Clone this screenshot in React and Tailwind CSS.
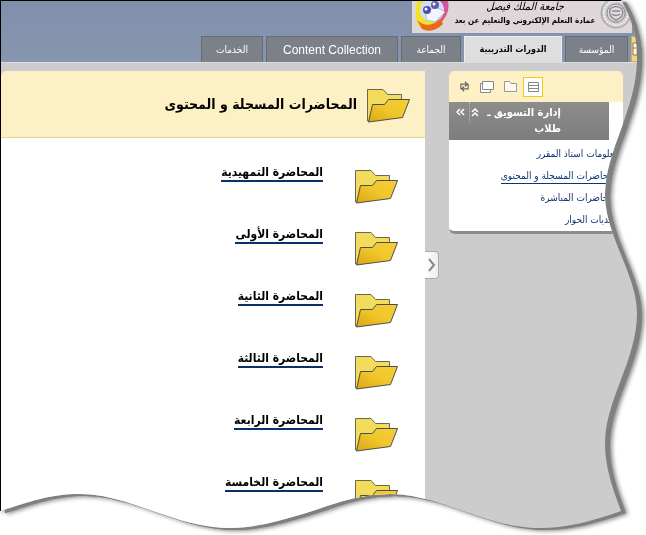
import React from "react";

const lectures = [
  "المحاضرة التمهيدية",
  "المحاضرة الأولى",
  "المحاضرة الثانية",
  "المحاضرة الثالثة",
  "المحاضرة الرابعة",
  "المحاضرة الخامسة",
];

const menu = [
  { label: "معلومات استاذ المقرر" },
  { label: "المحاضرات المسجلة و المحتوى", current: true },
  { label: "المحاضرات المباشرة" },
  { label: "منتديات الحوار" },
];

const tabs = [
  { label: "المؤسسة", width: "w-[63px]" },
  { label: "الدورات التدريبية", width: "w-[98px]", active: true },
  { label: "الجماعة", width: "w-[60px]" },
  { label: "Content Collection", width: "w-[132px]", latin: true },
  { label: "الخدمات", width: "w-[62px]" },
];

function TornEdge() {
  return (
    <svg className="absolute size-0" aria-hidden="true">
      <defs>
        <clipPath id="torn" clipPathUnits="objectBoundingBox" transform="scale(0.00154799 0.00186916)">
          <path d="M0 0H621C627 12 637 28 637 58C637 110 605 150 605 195C605 235 637 275 637 313C637 360 605 400 605 443C605 468 613 490 621 511C590 522 565 528 540 528C485 528 440 494 390 494C350 494 322 510 285 519C264 525 246 528 230 528C175 528 130 494 80 494C48 494 30 502 0 511Z" />
        </clipPath>
      </defs>
    </svg>
  );
}

function Folder() {
  return (
    <svg width="44" height="34" viewBox="0 0 44 34" className="shrink-0" aria-hidden="true">
      <defs>
        <linearGradient id="folderFront" x1="0" y1="1" x2="1" y2="0">
          <stop offset="0" stopColor="#dca514" />
          <stop offset="0.5" stopColor="#f0c62a" />
          <stop offset="1" stopColor="#f5cf36" />
        </linearGradient>
      </defs>
      <path d="M.5 .5H16L20.500 5.500H34.500V10L30 28L.5 32Z" fill="#f3dc5c" stroke="#6b6650" />
      <path d="M5.500 15.500H17.500L21.500 10.500H42.500L35.500 28.500L1.500 33Z" fill="url(#folderFront)" stroke="#4b4d50" strokeLinejoin="round" />
    </svg>
  );
}

function BannerArt() {
  return (
    <svg width="38" height="32" viewBox="0 0 38 32" className="shrink-0" aria-hidden="true">
      <path d="M5 0H36V10Q34 21 23 27Q13 33 6 24Q2 15 5 0Z" fill="#f0e428" />
      <path d="M26 0H36Q39 14 26 24L20 12Z" fill="#d6549a" />
      <path d="M5 19Q15 29 29 18L31 23Q21 33 10 28Z" fill="#e9691c" />
      <circle cx="20" cy="9" r="12" fill="#d5def0" />
      <path d="M14 11L24 6L33 11L23 21L14 19Z" fill="#f4f5fa" stroke="#b7bdd2" />
      <circle cx="15" cy="9" r="4" fill="#4d4fa6" />
      <circle cx="23" cy="4" r="4" fill="#5960b4" />
      <circle cx="14" cy="8" r="1.500" fill="#fff" />
      <circle cx="22" cy="3" r="1.500" fill="#fff" />
    </svg>
  );
}

function Seal() {
  return (
    <svg width="32" height="32" viewBox="0 0 32 32" className="shrink-0" aria-hidden="true">
      <circle cx="16" cy="12" r="15" fill="#c9c6c8" stroke="#a09da0" />
      <circle cx="16" cy="12" r="12" fill="none" stroke="#f4f0f2" strokeWidth="2" strokeDasharray="2 1" />
      <circle cx="16" cy="12" r="9" fill="#dedadd" stroke="#8d8b90" />
      <path d="M10 8Q16 3 22 8Q25 16 16 19Q8 16 10 8ZM12 10H20M12 13Q16 16 20 13" fill="none" stroke="#8d8b90" strokeWidth="1.500" />
    </svg>
  );
}

function Banner() {
  return (
    <div className="flex h-8 w-[220px] bg-[#ded6d9]">
      <Seal />
      <div className="flex flex-1 flex-col items-center whitespace-nowrap text-black">
        <span className="text-[11px] leading-3 italic">جامعة الملك فيصل</span>
        <span className="text-[8px] leading-4 font-bold">عمادة التعلم الإلكتروني والتعليم عن بعد</span>
      </div>
      <BannerArt />
    </div>
  );
}

function Tab({ tab }) {
  const look = tab.active
    ? "border-[#eee] bg-[#dedede] font-bold text-black"
    : "border-[#666b74] bg-[#7b8089] text-white";
  const size = tab.latin
    ? "text-[12px] font-['Liberation_Sans',sans-serif]"
    : tab.active
      ? "text-[9px]"
      : "text-[10px]";
  return (
    <button className={`h-full shrink-0 border border-b-0 whitespace-nowrap ${tab.width} ${size} ${look}`}>
      {tab.label}
    </button>
  );
}

function Header() {
  return (
    <header className="flex h-[61px] shrink-0 flex-col justify-between bg-linear-to-b from-[#8090ac] to-[#8796ae]">
      <div className="flex ps-[14px]">
        <Banner />
      </div>
      <nav className="flex h-[26px] gap-[3px]">
        <button aria-label="home" className="flex w-[15px] shrink-0 items-center justify-end border border-[#d2b055] bg-[#f3d583]">
          <svg width="6" height="16" viewBox="0 0 6 16" aria-hidden="true">
            <path d="M1 2H5V14H1ZM1 7H5" fill="#fff" stroke="#8e7434" />
          </svg>
        </button>
        {tabs.map((tab) => (
          <Tab key={tab.label} tab={tab} />
        ))}
      </nav>
    </header>
  );
}

function Toolbar() {
  return (
    <div dir="ltr" className="flex h-[31px] items-center gap-[3px] rounded-t-md bg-[#fdf0c4] ps-[5px] text-[#666]">
      <button aria-label="refresh" className="flex size-5 items-center justify-center">
        <svg width="11" height="11" viewBox="0 0 12 12" fill="none" stroke="currentColor" strokeWidth="1.300">
          <path d="M2 9V3.500H8M6.500 .8L9 3.500L6.500 6M10 3V8.500H4M5.500 6L3 8.500L5.500 11.200" />
        </svg>
      </button>
      <button aria-label="windows" className="flex size-5 items-center justify-center">
        <svg width="14" height="12" viewBox="0 0 14 12" fill="#fff" stroke="#888">
          <path d="M.5 2.500H10.500V11.500H.5Z" />
          <path d="M2.500 .5H13.500V8.500H2.500Z" />
        </svg>
      </button>
      <button aria-label="folders" className="flex size-5 items-center justify-center">
        <svg width="13" height="11" viewBox="0 0 13 11" fill="#fffaf0" stroke="#999">
          <path d="M.5 10.500V.5H5.500L7 2.500H12.500V10.500Z" />
        </svg>
      </button>
      <button aria-label="list" className="flex size-5 items-center justify-center border border-[#f0c91c] bg-white">
        <svg width="11" height="10" viewBox="0 0 11 10" fill="#fff" stroke="#888">
          <path d="M.5 .5H10.500V9.500H.5ZM1 3.500H10M1 6.500H10" />
        </svg>
      </button>
    </div>
  );
}

function Sidebar() {
  return (
    <aside className="w-[174px] shrink-0 self-start rounded-md border-b-[3px] border-[#8c8c8c] bg-white">
      <Toolbar />
      <div className="ms-[14px] flex h-[38px] justify-between bg-linear-to-b from-[#8d8d8d] to-[#7d7d7d] text-white">
        <h2 className="ps-12 pt-[3px] text-[11px] leading-4 font-bold whitespace-nowrap">
          إدارة التسويق ـ<br />طلاب
        </h2>
        <div className="flex h-5 pe-[2px]">
          <button aria-label="collapse" className="flex w-4 items-center justify-end border-e border-dotted border-[#bbb] pe-[1px]">
            <svg width="8" height="9" viewBox="0 0 8 9" fill="none" stroke="currentColor" strokeWidth="1.500">
              <path d="M1 4L4 1L7 4M1 8L4 5L7 8" />
            </svg>
          </button>
          <button aria-label="hide" className="flex w-[18px] items-center justify-center">
            <svg width="9" height="8" viewBox="0 0 9 8" fill="none" stroke="currentColor" strokeWidth="1.500">
              <path d="M4 1L1 4L4 7M8 1L5 4L8 7" />
            </svg>
          </button>
        </div>
      </div>
      <ul className="ps-1 pt-[3px]">
        {menu.map((item) => (
          <li key={item.label} className="flex h-[22px] items-center">
            <a href="#" className={`text-[10px] leading-[14px] whitespace-nowrap text-[#0b3573] ${item.current ? "border-b border-[#0b3573]" : ""}`}>
              {item.label}
            </a>
          </li>
        ))}
      </ul>
    </aside>
  );
}

function Content() {
  return (
    <main className="flex-1 rounded-tl-md bg-white">
      <div className="flex h-[67px] items-center gap-[10px] rounded-tl-md border-b border-[#e3d68f] bg-[#fdf0c4] ps-[14px]">
        <div className="pt-1">
          <Folder />
        </div>
        <h1 className="text-sm font-bold whitespace-nowrap text-black">المحاضرات المسجلة و المحتوى</h1>
      </div>
      <ul className="ps-[26px] pt-[26px]">
        {lectures.map((name) => (
          <li key={name} className="flex h-[62px] gap-8">
            <div className="pt-1.5">
              <Folder />
            </div>
            <a href="#" className="self-start border-b-2 border-[#0b2f6b] text-xs/4 font-bold whitespace-nowrap text-black">
              {name}
            </a>
          </li>
        ))}
      </ul>
    </main>
  );
}

export default function App() {
  return (
    <div className="min-h-screen bg-white">
      <TornEdge />
      <div className="[filter:drop-shadow(5px_2px_0_#808080)_drop-shadow(2px_1px_2px_#888)]">
        <div
          dir="rtl"
          className="flex h-screen flex-col overflow-hidden border-t border-l border-black bg-[#ccc] font-['DejaVu_Sans_Condensed','DejaVu_Sans',sans-serif] [clip-path:url(#torn)]"
        >
          <Header />
          <div className="flex flex-1 border-t border-[#ddd] ps-[23px] pt-2">
            <Sidebar />
            <div className="flex w-6 shrink-0 justify-end">
              <button
                aria-label="toggle menu"
                className="mt-[180px] flex h-7 w-[14px] items-center justify-center rounded-r-sm border border-l-0 border-[#aaa] bg-linear-to-r from-white to-[#eee]"
              >
                <svg width="8" height="14" viewBox="0 0 8 14" fill="none" stroke="#888" strokeWidth="2">
                  <path d="M1 1L6 7L1 13" />
                </svg>
              </button>
            </div>
            <Content />
          </div>
        </div>
      </div>
    </div>
  );
}
